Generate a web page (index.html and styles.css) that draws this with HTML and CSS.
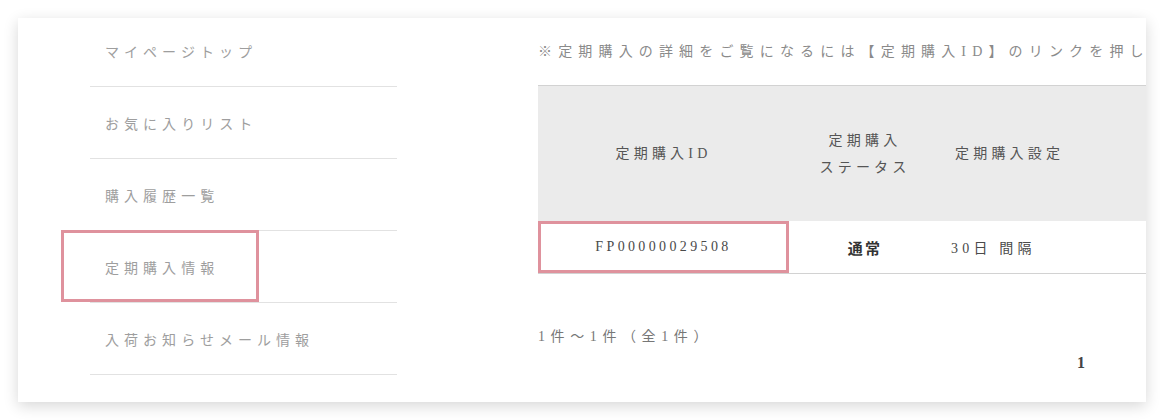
FILE: index.html
```html
<!DOCTYPE html>
<html lang="ja">
<head>
<meta charset="utf-8">
<title>定期購入情報</title>
<link rel="stylesheet" href="styles.css">
</head>
<body>
<div class="page">
  <div class="card">
    <nav class="side">
      <a class="side-item">マイページトップ</a>
      <a class="side-item">お気に入りリスト</a>
      <a class="side-item">購入履歴一覧</a>
      <a class="side-item current">定期購入情報<span class="mark"></span></a>
      <a class="side-item">入荷お知らせメール情報</a>
    </nav>
    <main class="main">
      <p class="notice">※定期購入の詳細をご覧になるには【定期購入ID】のリンクを押してください。</p>
      <table class="list">
        <colgroup>
          <col class="w-id">
          <col class="w-status">
          <col class="w-set">
          <col class="w-next">
        </colgroup>
        <thead>
          <tr>
            <th class="c-id">定期購入ID</th>
            <th class="c-status">定期購入<br>ステータス</th>
            <th class="c-set">定期購入設定</th>
            <th class="c-next">次回お届け予定日</th>
          </tr>
        </thead>
        <tbody>
          <tr>
            <td class="c-id hl">FP00000029508</td>
            <td class="c-status strong">通常</td>
            <td class="c-set">30日 間隔</td>
            <td class="c-next">2024/01/01</td>
          </tr>
        </tbody>
      </table>
      <p class="count">1件～1件（全1件）</p>
      <div class="pager"><span class="page-num">1</span></div>
    </main>
  </div>
</div>
</body>
</html>
```

FILE: styles.css
```css
html, body {
  margin: 0;
  padding: 0;
  background: #ffffff;
}

.page {
  padding: 18px;
}

.card {
  width: 1128px;
  height: 384px;
  background: #ffffff;
  display: flex;
  overflow: hidden;
  box-shadow: 0 4px 14px rgba(0, 0, 0, 0.16);
}

.side {
  flex: none;
  width: 307px;
  margin-left: 72px;
  margin-top: -3px;
  display: flex;
  flex-direction: column;
}

.side-item {
  position: relative;
  display: block;
  padding: 26px 0 25px 15px;
  line-height: 20px;
  font-family: "Noto Sans CJK JP", sans-serif;
  font-size: 14px;
  letter-spacing: 0.36em;
  color: #9e9e9e;
  border-bottom: 1px solid #e2e2e2;
  white-space: nowrap;
}

.mark {
  position: absolute;
  top: -1px;
  left: -29px;
  width: 198px;
  height: 72px;
  box-sizing: border-box;
  border: 3px solid #df929d;
}

.main {
  flex: none;
  width: 900px;
  margin-left: 141px;
  font-family: "Liberation Serif", "Noto Sans CJK JP", serif;
}

.notice {
  margin: 0;
  padding-top: 22px;
  line-height: 24px;
  font-family: "Liberation Serif", "Noto Sans CJK JP", serif;
  font-size: 14px;
  letter-spacing: 0.44em;
  color: #8a8a8a;
  white-space: nowrap;
}

.list {
  width: 853px;
  margin-top: 21px;
  border-collapse: collapse;
  border-top: 1px solid #d2d2d2;
  table-layout: fixed;
}

.w-id { width: 251px; }
.w-status { width: 152px; }
.w-set { width: 250px; }
.w-next { width: 200px; }

.list th {
  height: 135px;
  padding: 0;
  background: #ebebeb;
  font-family: "Liberation Serif", "Noto Sans CJK JP", serif;
  font-weight: normal;
  font-size: 14px;
  line-height: 27px;
  letter-spacing: 0.3em;
  color: #555555;
  vertical-align: middle;
}

.list td {
  height: 52px;
  padding: 0;
  font-size: 14px;
  letter-spacing: 0.24em;
  color: #4a4a4a;
  border-bottom: 1px solid #d2d2d2;
  vertical-align: middle;
}

.c-id,
.c-status,
.c-next {
  text-align: center;
}

.c-set {
  text-align: left;
}

.list th.c-set {
  padding-left: 14px;
}

.list td.c-set {
  padding-left: 10px;
  letter-spacing: 0.3em;
}

.list th.c-next,
.list td.c-next {
  color: transparent;
}

.list td.hl {
  box-shadow: inset 0 0 0 3px #df929d;
}

.list td.strong {
  font-family: "Noto Sans CJK JP", sans-serif;
  font-weight: bold;
  font-size: 15px;
  color: #333333;
  letter-spacing: 0.15em;
}

.count {
  margin: 51px 0 0;
  line-height: 24px;
  font-size: 14px;
  letter-spacing: 0.4em;
  color: #777777;
}

.pager {
  margin-left: 539px;
  padding-top: 2px;
  line-height: 24px;
}

.page-num {
  font-family: "Liberation Serif", serif;
  font-weight: bold;
  font-size: 16px;
  color: #444444;
}
```
